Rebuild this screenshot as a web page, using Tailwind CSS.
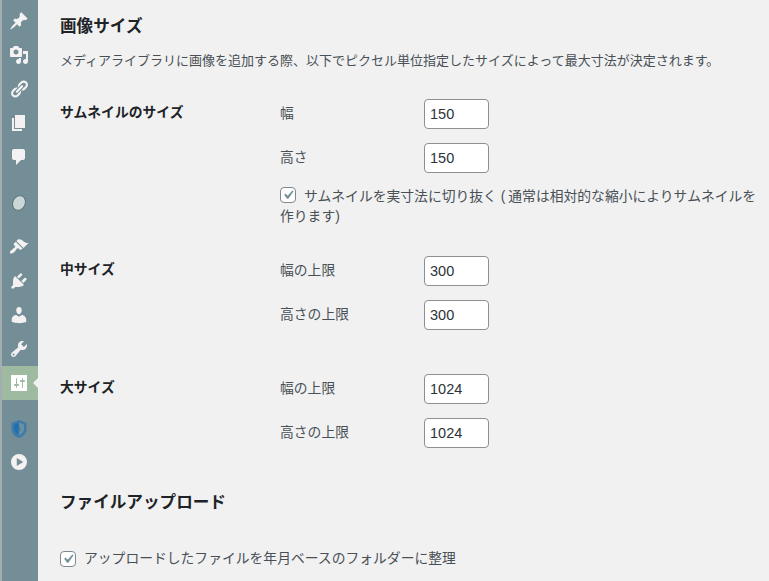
<!DOCTYPE html>
<html lang="ja">
<head>
<meta charset="utf-8">
<script src="https://cdn.jsdelivr.net/npm/@tailwindcss/browser@4"></script>
</head>
<body class="h-[581px] overflow-hidden bg-[#f1f1f1] text-[13.8px] leading-[20px] text-[#484f55] font-['Liberation_Sans','Noto_Sans_CJK_JP',sans-serif]">
<div class="flex h-[581px] overflow-hidden">
  <nav class="w-[38px] h-[581px] shrink-0 bg-[#738e96] border-l-2 border-[#a4adb0] flex flex-col items-center text-[#f3f1f1]">
    <div class="h-[11px] shrink-0"></div>
    <svg class="w-[20px] h-[20px] shrink-0 mb-[14px] -translate-x-[1px]" viewBox="0 0 20 20" fill="currentColor"><path d="M10.44 3.02l1.82-1.82 6.36 6.35-1.83 1.82c-1.05-.68-2.48-.57-3.41.36l-.75.75c-.92.93-1.04 2.35-.35 3.41l-1.83 1.82-2.41-2.41-2.8 2.79c-.42.42-3.38 2.71-3.8 2.29s1.86-3.39 2.28-3.81l2.79-2.79L4.1 9.36l1.83-1.82c1.05.69 2.48.57 3.4-.36l.75-.75c.93-.92 1.05-2.35.36-3.41z"/></svg>
    <svg class="w-[20px] h-[20px] shrink-0 mb-[14px] -translate-x-[1px]" viewBox="0 0 20 20" fill="currentColor"><path d="M13 11V4c0-.55-.45-1-1-1h-1.67L9 1H5L3.67 3H2c-.55 0-1 .45-1 1v7c0 .55.45 1 1 1h10c.55 0 1-.45 1-1zM7 4.5c1.38 0 2.5 1.12 2.5 2.5S8.38 9.5 7 9.5 4.5 8.38 4.5 7 5.62 4.5 7 4.5zM14 6h5v10.5c0 1.38-1.12 2.5-2.5 2.5S14 17.88 14 16.5s1.12-2.5 2.5-2.5c.17 0 .34.02.5.05V9h-3V6zm-4 8.05V13h2v3.5c0 1.38-1.12 2.5-2.5 2.5S7 17.88 7 16.5 8.12 14 9.5 14c.17 0 .34.02.5.05z"/></svg>
    <svg class="w-[20px] h-[20px] shrink-0 mb-[14px] -translate-x-[1px]" viewBox="0 0 20 20" fill="currentColor"><path d="M17.74 2.76c1.68 1.69 1.68 4.41 0 6.1l-1.53 1.52c-1.12 1.12-2.7 1.47-4.14 1.09l2.62-2.61.76-.77.76-.76c.84-.84.84-2.2 0-3.04-.84-.85-2.2-.85-3.04 0l-.77.76-3.38 3.38c-.37-1.44-.02-3.02 1.1-4.14l1.52-1.53c1.69-1.68 4.42-1.68 6.1 0zM8.59 13.43l5.34-5.34c.42-.42.42-1.1 0-1.52-.44-.43-1.13-.39-1.53 0l-5.33 5.34c-.42.42-.42 1.1 0 1.52.44.43 1.13.39 1.52 0zm-.76 2.29l4.14-4.15c.38 1.44.03 3.02-1.09 4.14l-1.52 1.53c-1.69 1.68-4.41 1.68-6.1 0-1.68-1.68-1.68-4.42 0-6.1l1.53-1.52c1.12-1.12 2.7-1.47 4.14-1.1l-4.14 4.15c-.85.84-.85 2.2 0 3.05.84.84 2.2.84 3.04 0z"/></svg>
    <svg class="w-[20px] h-[20px] shrink-0 mb-[14px] -translate-x-[1px]" viewBox="0 0 20 20" fill="currentColor"><path d="M6 15V2h10v13H6zm-1 1h8v2H3V5h2v11z"/></svg>
    <svg class="w-[20px] h-[20px] shrink-0 mb-[26px] -translate-x-[1px]" viewBox="0 0 20 20" fill="currentColor"><path d="M5 2h9c1.1 0 2 .9 2 2v7c0 1.1-.9 2-2 2h-2l-5 5v-5H5c-1.1 0-2-.9-2-2V4c0-1.1.9-2 2-2z"/></svg>
    <svg class="w-[20px] h-[20px] shrink-0 mb-[24px] -translate-x-[1px]" viewBox="0 0 20 20"><ellipse cx="10" cy="10" rx="6.2" ry="7.6" transform="rotate(25 10 10)" fill="#cbd6d6" stroke="#4d646b" stroke-width="0.8"/></svg>
    <svg class="w-[20px] h-[20px] shrink-0 mb-[14px] -translate-x-[1px]" viewBox="0 0 20 20" fill="currentColor"><path d="M14.48 11.06L7.41 3.99l1.5-1.5c.5-.56 2.3-.47 3.51.32 1.21.8 1.43 1.28 2.91 2.1 1.18.64 2.45 1.26 4.45.85zm-.71.71L6.7 4.7 4.93 6.47c-.39.39-.39 1.02 0 1.41l1.06 1.06c.39.39.39 1.03 0 1.42-.6.6-1.43 1.11-2.21 1.69-.35.26-.7.53-1.01.84C1.43 13.23.5 15.62 1.18 16.3c.68.68 3.07-.25 4.4-1.59.31-.31.58-.66.84-1.01.58-.78 1.09-1.61 1.69-2.21.39-.39 1.03-.39 1.42 0l1.06 1.06c.39.39 1.02.39 1.41 0z"/></svg>
    <svg class="w-[20px] h-[20px] shrink-0 mb-[14px] -translate-x-[1px]" viewBox="0 0 20 20" fill="currentColor"><path d="M13.11 4.36L9.87 7.6 8 5.73l3.24-3.24c.35-.34 1.05-.2 1.56.32.52.51.66 1.21.31 1.55zm-8 1.77l.91-1.12 9.01 9.01-1.19.84c-.71.71-2.63 1.16-3.82 1.16H6.14L4.9 17.26c-.59.59-1.54.59-2.12 0-.59-.58-.59-1.53 0-2.12l1.24-1.24v-3.88c0-1.13.4-3.19 1.09-3.89zm7.26 3.97l3.24-3.24c.34-.35 1.04-.21 1.55.31.52.51.66 1.21.31 1.55l-3.24 3.25z"/></svg>
    <svg class="w-[20px] h-[20px] shrink-0 mb-[14px] -translate-x-[1px]" viewBox="0 0 20 20" fill="currentColor"><path d="M10 9.25c-2.27 0-2.73-3.44-2.73-3.44C7 4.02 7.82 2 9.97 2c2.16 0 2.98 2.02 2.71 3.81 0 0-.41 3.44-2.68 3.44zm0 2.57L12.72 10c2.39 0 4.52 2.33 4.52 4.53v2.49s-3.65 1.13-7.24 1.13c-3.65 0-7.24-1.13-7.24-1.13v-2.49c0-2.25 1.94-4.48 4.47-4.48z"/></svg>
    <svg class="w-[20px] h-[20px] shrink-0 -translate-x-[1px] mb-[7px]" viewBox="0 0 20 20" fill="currentColor"><path d="M16.68 9.77c-1.34 1.34-3.3 1.67-4.95.99l-5.41 6.52c-.99.99-2.59.99-3.58 0s-.99-2.59 0-3.57l6.52-5.42c-.68-1.65-.35-3.61.99-4.95 1.28-1.28 3.12-1.62 4.72-1.06l-2.89 2.89 2.82 2.82 2.86-2.87c.53 1.58.18 3.39-1.08 4.65zM3.81 16.21c.4.39 1.04.39 1.43 0 .4-.4.4-1.04 0-1.43-.39-.4-1.03-.4-1.43 0-.39.39-.39 1.03 0 1.43z"/></svg>
    <div class="relative w-full h-[34px] shrink-0 bg-[#9ebaa0] flex items-center justify-center mb-[19px]">
      <svg class="w-[20px] h-[20px] -translate-x-[1px]" viewBox="0 0 20 20" fill="#fff"><path d="M18 18V2H2v16zM8 11h1c.55 0 1 .45 1 1s-.45 1-1 1H8v1.5c0 .28-.22.5-.5.5s-.5-.22-.5-.5V13H6c-.55 0-1-.45-1-1s.45-1 1-1h1V5.5c0-.28.22-.5.5-.5s.5.22.5.5V11zm5-2h-1c-.55 0-1-.45-1-1s.45-1 1-1h1V5.5c0-.28.22-.5.5-.5s.5.22.5.5V7h1c.55 0 1 .45 1 1s-.45 1-1 1h-1v5.5c0 .28-.22.5-.5.5s-.5-.22-.5-.5V9z"/></svg>
      <span class="absolute right-0 top-[12px] w-0 h-0 border-y-[5px] border-y-transparent border-r-[5px] border-r-[#f1f1f1]"></span>
    </div>
    <svg class="w-[18px] h-[20px] shrink-0 mb-[13px] -translate-x-[1px]" viewBox="0 0 18 20"><path d="M9 1l7.5 3v6c0 4.5-3.2 7.6-7.5 9-4.3-1.4-7.5-4.5-7.5-9V4z" fill="#3f7ba6"/><path d="M9 3.5l5 2v4.5c0 3-2.2 5.2-5 6.3-2.8-1.1-5-3.3-5-6.3V5.5z" fill="#6b8fa3"/><path d="M9 3.5v12.8c-2.8-1.1-5-3.3-5-6.3V5.5z" fill="#2270ad"/><path d="M10.2 6.5L7.8 10.5h1.5L8.4 14l2.8-4.4H9.6z" fill="#4a7c9e"/></svg>
    <svg class="w-[20px] h-[20px] shrink-0 -translate-x-[1px]" viewBox="0 0 20 20" fill="currentColor"><path fill-rule="evenodd" d="M10 2a8 8 0 1 1 0 16a8 8 0 0 1 0-16zM7.8 6v8l6.4-4z"/></svg>
  </nav>

  <main class="flex-1 min-w-0 pl-[22px]">
    <h2 class="mt-[15px] h-[24px] leading-[24px] text-[16.6px] font-semibold text-[#1d2327]">画像サイズ</h2>
    <p class="mt-[12px] h-[20px] whitespace-nowrap text-[13px]">メディアライブラリに画像を追加する際、以下でピクセル単位指定したサイズによって最大寸法が決定されます。</p>

    <section class="flex mt-[28px]">
      <h3 class="w-[220px] shrink-0 pt-[4px] text-[13.8px] font-semibold text-[#1d2327]">サムネイルのサイズ</h3>
      <div class="w-[480px] shrink-0">
        <div class="flex items-center h-[30px] mb-[14px]"><span class="w-[144px]">幅</span><input value="150" class="w-[65px] h-[30px] px-[5px] bg-white border border-[#8c8f94] rounded-[4px] text-[14.5px] text-[#2c3338]"></div>
        <div class="flex items-center h-[30px] mb-[14px]"><span class="w-[144px]">高さ</span><input value="150" class="w-[65px] h-[30px] px-[5px] bg-white border border-[#8c8f94] rounded-[4px] text-[14.5px] text-[#2c3338]"></div>
        <label class="block">
          <span class="inline-flex align-[-3px] items-center justify-center w-[16px] h-[16px] mr-[8px] bg-white border border-[#7e8993] rounded-[4px]"><svg class="w-[18px] h-[18px] shrink-0" viewBox="0 0 20 20" fill="#738e96"><path d="M14.83 4.89l1.34.94-5.81 8.38H9.02L5.78 9.67l1.34-1.25 2.57 2.4z"/></svg></span>サムネイルを実寸法に切り抜く <span class="pr-[3px]">(</span>通常は相対的な縮小によりサムネイルを作ります)
        </label>
      </div>
    </section>

    <section class="flex mt-[29px]">
      <h3 class="w-[220px] shrink-0 pt-[4px] text-[13.8px] font-semibold text-[#1d2327]">中サイズ</h3>
      <div class="w-[478px] shrink-0">
        <div class="flex items-center h-[30px] mb-[14px]"><span class="w-[144px]">幅の上限</span><input value="300" class="w-[65px] h-[30px] px-[5px] bg-white border border-[#8c8f94] rounded-[4px] text-[14.5px] text-[#2c3338]"></div>
        <div class="flex items-center h-[30px]"><span class="w-[144px]">高さの上限</span><input value="300" class="w-[65px] h-[30px] px-[5px] bg-white border border-[#8c8f94] rounded-[4px] text-[14.5px] text-[#2c3338]"></div>
      </div>
    </section>

    <section class="flex mt-[44px]">
      <h3 class="w-[220px] shrink-0 pt-[4px] text-[13.8px] font-semibold text-[#1d2327]">大サイズ</h3>
      <div class="w-[478px] shrink-0">
        <div class="flex items-center h-[30px] mb-[14px]"><span class="w-[144px]">幅の上限</span><input value="1024" class="w-[65px] h-[30px] px-[5px] bg-white border border-[#8c8f94] rounded-[4px] text-[14.5px] text-[#2c3338]"></div>
        <div class="flex items-center h-[30px]"><span class="w-[144px]">高さの上限</span><input value="1024" class="w-[65px] h-[30px] px-[5px] bg-white border border-[#8c8f94] rounded-[4px] text-[14.5px] text-[#2c3338]"></div>
      </div>
    </section>

    <h2 class="mt-[43px] h-[24px] leading-[24px] text-[16.6px] font-semibold text-[#1d2327]">ファイルアップロード</h2>
    <label class="flex items-center mt-[34px] h-[20px] whitespace-nowrap">
      <span class="inline-flex items-center justify-center w-[16px] h-[16px] mr-[8px] bg-white border border-[#7e8993] rounded-[4px]"><svg class="w-[18px] h-[18px] shrink-0" viewBox="0 0 20 20" fill="#738e96"><path d="M14.83 4.89l1.34.94-5.81 8.38H9.02L5.78 9.67l1.34-1.25 2.57 2.4z"/></svg></span>アップロードしたファイルを年月ベースのフォルダーに整理
    </label>
  </main>
</div>
</body>
</html>
